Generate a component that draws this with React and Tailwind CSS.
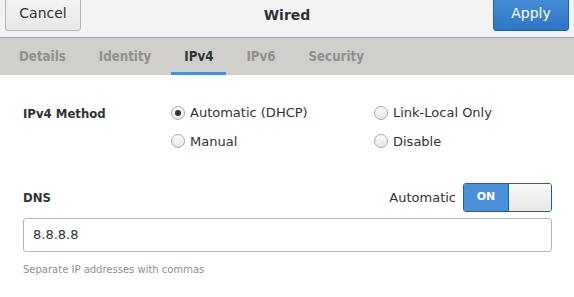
import React, { useState } from "react";

function Radio({ checked, label }) {
  return (
    <label className="flex items-center gap-[5px] cursor-pointer">
      <span className="w-[14px] h-[14px] rounded-full border border-[#a8a8a8] bg-gradient-to-b from-[#fbfbfb] to-[#e6e6e6] flex items-center justify-center">
        {checked && <span className="w-[6px] h-[6px] rounded-full bg-[#2e3436]"></span>}
      </span>
      <span>{label}</span>
    </label>
  );
}

const condBold = { fontFamily: '"DejaVu Sans Condensed", "DejaVu Sans", sans-serif', fontWeight: 700 };

export default function App() {
  const [method, setMethod] = useState("auto");
  const tabs = ["Details", "Identity", "IPv4", "IPv6", "Security"];

  return (
    <div className="w-[574px] h-[297px] bg-white text-[#2e3436] text-[13px] overflow-hidden" style={{ fontFamily: '"DejaVu Sans", sans-serif' }}>
      {/* Header bar */}
      <header className="h-[38px] bg-[#f3f3f3] border-b border-[#a1a1a1] flex items-end justify-between px-[5px] pb-[6px] overflow-hidden">
        <button className="w-[76px] h-[40px] rounded-[3px] border border-[#b6b6b3] bg-gradient-to-b from-[#f6f6f6] to-[#e8e8e7] text-[#2e3436] text-[14px] flex items-end justify-center pb-[6px]">
          Cancel
        </button>
        <h1 className="font-bold text-[14px] self-center pt-0">Wired</h1>
        <button className="w-[76px] h-[40px] rounded-[3px] border border-[#1b5fa8] bg-gradient-to-b from-[#4a90d9] to-[#2f76c4] text-white text-[14px] flex items-end justify-center pb-[6px]">
          Apply
        </button>
      </header>

      {/* Tabs */}
      <nav className="h-[37px] bg-[#d0cfcc] flex items-stretch gap-[7px] pl-[6px]">
        {tabs.map((t) => (
          <div
            key={t}
            style={condBold}
            className={`px-[13px] pt-[4px] flex items-center text-[13.2px] border-b-[3px] ${
              t === "IPv4" ? "text-[#2e3436] border-[#4a90d9]" : "text-[#8e908d] border-transparent"
            }`}
          >
            {t}
          </div>
        ))}
      </nav>

      {/* Content */}
      <main className="px-[23px] pt-[28px]">
        <div className="flex">
          <div style={condBold} className="w-[148px] pt-px">IPv4 Method</div>
          <div className="grid grid-cols-[203px_auto] gap-y-[9px]">
            <div onClick={() => setMethod("auto")}><Radio checked={method === "auto"} label="Automatic (DHCP)" /></div>
            <div onClick={() => setMethod("link")}><Radio checked={method === "link"} label="Link-Local Only" /></div>
            <div onClick={() => setMethod("manual")}><Radio checked={method === "manual"} label="Manual" /></div>
            <div onClick={() => setMethod("disable")}><Radio checked={method === "disable"} label="Disable" /></div>
          </div>
        </div>

        <div className="flex items-center justify-between mt-[32px] mr-[-1px]">
          <div style={condBold}>DNS</div>
          <div className="flex items-center gap-[7px]">
            <span>Automatic</span>
            <div className="w-[89px] h-[29px] rounded-[3px] border border-[#1b5fa8] flex overflow-hidden">
              <div className="w-[44px] bg-[#4a90d9] text-white text-[11px] font-bold flex items-center justify-center">ON</div>
              <div className="flex-1 border-l border-[#1b5fa8] bg-gradient-to-b from-[#f8f8f8] to-[#e8e8e7]"></div>
            </div>
          </div>
        </div>

        <div className="mt-[6px] mr-[-1px] h-[34px] rounded-[3px] border border-[#b6b6b3] flex items-center px-[9px]">
          8.8.8.8
        </div>
        <p className="mt-[10px] text-[10px] text-[#8e908d]">Separate IP addresses with commas</p>
      </main>
    </div>
  );
}
